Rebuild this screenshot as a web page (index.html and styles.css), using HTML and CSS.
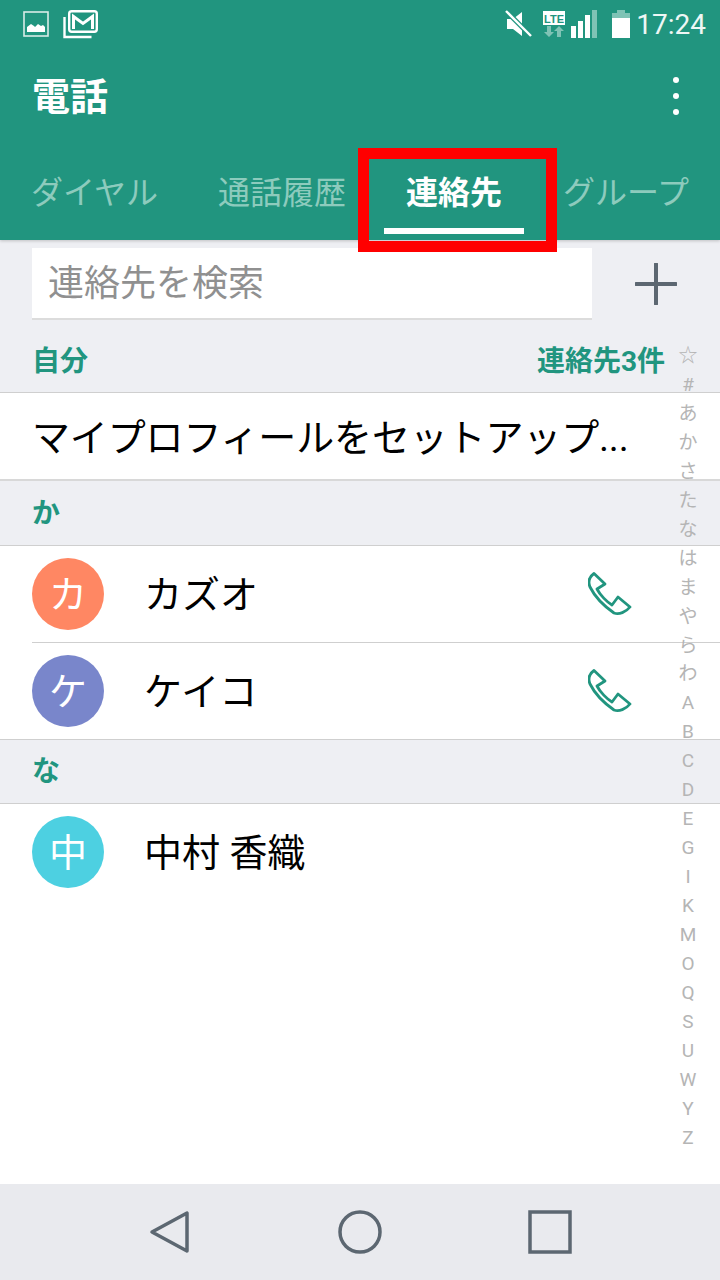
FILE: index.html
```html
<!DOCTYPE html>
<html lang="ja">
<head>
    <meta charset="UTF-8">
    <title>電話</title>
    <link rel="stylesheet" href="styles.css">
</head>
<body>
    <div class="phone">
        <!-- ヘッダー -->
        <header class="header">
            <div class="status-bar">
                <div class="status-left">
                    <svg class="ico-image" width="26" height="26" viewBox="0 0 26 26"><rect x="1" y="1" width="24" height="24" fill="none" stroke="#d9ece8" stroke-width="1.600"/><path d="M4 21v-5l4-3 3 2 1 1 3-3 3 2 2-1 2 2v5z" fill="#fff"/></svg>
                    <svg class="ico-mail" width="35" height="29" viewBox="0 0 35 29"><path d="M1.500 7v20h27" fill="none" stroke="#fff" stroke-width="2.400"/><rect x="6.200" y="1.200" width="27.600" height="20.600" rx="2.500" fill="none" stroke="#fff" stroke-width="2.400"/><path d="M10.500 19V6.500l9.500 7 9.500-7V19" fill="none" stroke="#fff" stroke-width="3"/></svg>
                </div>
                <div class="status-right">
                    <svg class="ico-mute" width="28" height="28" viewBox="0 0 28 28"><path d="M2 9h6l9-7v24l-9-7H2z" fill="#fff"/><path d="M1 1l25 25" stroke="#21957f" stroke-width="5"/><path d="M1 1l25 25" stroke="#fff" stroke-width="2.400"/></svg>
                    <svg class="ico-lte" width="22" height="27" viewBox="0 0 22 27"><rect width="22" height="14" fill="#fff"/><text x="11" y="11.500" text-anchor="middle" class="lte-text">LTE</text><path d="M4 15h4v6h3l-5 5-5-5h3zM14 26h4v-6h3l-5-5-5 5h3z" fill="#7fc3b5"/></svg>
                    <svg class="ico-signal" width="26" height="28" viewBox="0 0 26 28"><rect y="16" width="5" height="12" fill="#fff"/><rect x="7" y="11" width="5" height="17" fill="#fff"/><rect x="14" y="5" width="5" height="23" fill="#fff"/><rect x="21" width="5" height="28" fill="#7fc3b5"/></svg>
                    <svg class="ico-battery" width="18" height="28" viewBox="0 0 18 28"><path d="M5 0h8v3h5v5H0V3h5z" fill="#7fc3b5"/><rect y="8" width="18" height="20" fill="#fff"/></svg>
                    <span class="clock">17:24</span>
                </div>
            </div>
            <div class="title-row">
                <h1 class="title">電話</h1>
                <div class="more"><i></i><i></i><i></i></div>
            </div>
            <nav class="tabs">
                <span class="tab tab-dial">ダイヤル</span>
                <span class="tab tab-log">通話履歴</span>
                <span class="tab tab-on">連絡先</span>
                <span class="tab tab-group">グループ</span>
            </nav>
        </header>

        <!-- 検索 -->
        <div class="search-row">
            <div class="search">連絡先を検索</div>
            <svg class="plus" width="42" height="42" viewBox="0 0 42 42"><path d="M1 21h40M21 1v40" stroke="#5c6771" stroke-width="4" stroke-linecap="round"/></svg>
        </div>

        <div class="section section-me">
            <span>自分</span>
            <span class="count">連絡先3件</span>
        </div>
        <div class="profile">マイプロフィールをセットアップ...</div>

        <div class="section section-ka">か</div>
        <div class="contact with-line">
            <div class="avatar orange">カ</div>
            <div class="name">カズオ</div>
            <svg class="call" width="44" height="44" viewBox="0 0 44 44"><path d="M6 1.500C1 5 0 10 2 15c5 10 14 19 24 26 5 2 12-1 16-6L30 25l-6 8c-5-3-12-10-15-16l8-5z" fill="none" stroke="#21957f" stroke-width="2.800" stroke-linejoin="round"/></svg>
        </div>
        <div class="contact">
            <div class="avatar purple">ケ</div>
            <div class="name">ケイコ</div>
            <svg class="call" width="44" height="44" viewBox="0 0 44 44"><path d="M6 1.500C1 5 0 10 2 15c5 10 14 19 24 26 5 2 12-1 16-6L30 25l-6 8c-5-3-12-10-15-16l8-5z" fill="none" stroke="#21957f" stroke-width="2.800" stroke-linejoin="round"/></svg>
        </div>

        <div class="section">な</div>
        <div class="contact no-line">
            <div class="avatar cyan">中</div>
            <div class="name">中村 香織</div>
        </div>

        <div class="spacer"></div>

        <!-- ナビゲーションバー -->
        <footer class="nav-bar">
            <svg width="44" height="44" viewBox="0 0 44 44"><path d="M39 3v38L4 22z" fill="none" stroke="#5c6771" stroke-width="3.500" stroke-linejoin="round"/></svg>
            <svg width="44" height="44" viewBox="0 0 44 44"><circle cx="22" cy="22" r="20" fill="none" stroke="#5c6771" stroke-width="3.500"/></svg>
            <svg width="44" height="44" viewBox="0 0 44 44"><rect x="2" y="2" width="40" height="40" fill="none" stroke="#5c6771" stroke-width="3.500"/></svg>
        </footer>

        <!-- 重なる要素 -->
        <div class="highlight"></div>
        <div class="index">
            <span>☆</span><span>#</span><span>あ</span><span>か</span><span>さ</span><span>た</span><span>な</span><span>は</span><span>ま</span><span>や</span><span>ら</span><span>わ</span><span>A</span><span>B</span><span>C</span><span>D</span><span>E</span><span>G</span><span>I</span><span>K</span><span>M</span><span>O</span><span>Q</span><span>S</span><span>U</span><span>W</span><span>Y</span><span>Z</span>
        </div>
    </div>
</body>
</html>
```

FILE: styles.css
```css
* { box-sizing: border-box; }
body { margin: 0; font-family: Roboto, "Noto Sans CJK JP", sans-serif; }
.phone { position: relative; width: 720px; height: 1280px; display: flex; flex-direction: column; background: #fff; overflow: hidden; }

.header { height: 240px; flex: none; background: #21957f; color: #fff; box-shadow: 0 1px 3px rgba(0, 0, 0, 0.2); position: relative; }
.status-bar { height: 48px; display: flex; justify-content: space-between; padding: 10px 14px 0 23px; }
.status-left { display: flex; gap: 14px; align-items: flex-start; }
.ico-image { margin-top: 1px; }
.status-right { display: flex; align-items: flex-start; }
.ico-mute { margin: 0 10px 0 0; }
.ico-lte { margin: 1px 6px 0 0; }
.ico-signal { margin: 0 15px 0 0; }
.ico-battery { margin: 0 6px 0 0; }
.lte-text { font: bold 11px "Liberation Sans", sans-serif; fill: #21957f; }
.clock { font-size: 28px; line-height: 30px; color: #eef7f5; }

.title-row { height: 96px; padding: 0 41px 0 32px; display: flex; align-items: center; justify-content: space-between; }
.title { margin: 0 0 6px; font-size: 38px; font-weight: 700; }
.more { display: flex; flex-direction: column; gap: 10px; }
.more i { display: block; width: 6px; height: 6px; border-radius: 50%; background: #fff; }

.tabs { height: 96px; display: flex; padding: 0 0 0 31px; }
.tab { font-size: 32px; line-height: 98px; color: #8dcbbd; white-space: nowrap; }
.tab-dial { width: 187px; }
.tab-log { width: 188px; }
.tab-on { width: 157px; color: #fff; font-weight: 700; position: relative; }
.tab-on::after { content: ""; position: absolute; left: -22px; top: 84px; width: 140px; height: 6px; background: #fff; }

.search-row { height: 80px; flex: none; background: #eeeff3; padding: 8px 0 0 32px; display: flex; }
.search { width: 560px; height: 72px; background: #fff; border-bottom: 2px solid #dcdcdc; font-size: 36px; line-height: 73px; padding-left: 16px; color: #909090; }
.plus { margin: 15px 0 0 43px; }

.section { height: 64px; flex: none; background: #eeeff3; border-bottom: 1px solid #cfcfcf; color: #21957f; font-size: 28px; font-weight: 700; line-height: 64px; padding: 0 32px; }
.section-me { height: 73px; line-height: 84px; display: flex; justify-content: space-between; padding-right: 55px; }
.section-ka { height: 65px; line-height: 66px; }
.profile { height: 88px; flex: none; background: #fff; border-bottom: 2px solid #d8d8d8; font-size: 38px; letter-spacing: -0.15px; line-height: 90px; padding-left: 32px; color: #000; white-space: nowrap; }

.contact { height: 97px; flex: none; padding: 0 0 1px 32px; display: flex; align-items: center; background: #fff; border-bottom: 1px solid #cfcfcf; position: relative; }
.contact.with-line { border-bottom: 0; }
.contact.with-line::after { content: ""; position: absolute; left: 32px; right: 0; bottom: 0; height: 1px; background: #cfcfcf; }
.contact.no-line { border-bottom: 0; }
.avatar { width: 72px; height: 72px; border-radius: 50%; color: #fff; font-size: 38px; line-height: 74px; text-align: center; }
.orange { background: #ff8763; }
.purple { background: #7986cb; }
.cyan { background: #4dd0e1; }
.name { flex: 1; margin: 0 0 5px 40px; font-size: 38px; color: #000; }
.call { margin-right: 88px; }

.spacer { flex: 1; }
.nav-bar { height: 96px; flex: none; background: #e9eaee; display: flex; align-items: center; justify-content: space-between; padding: 0 148px; }

.highlight { position: absolute; left: 358px; top: 148px; width: 199px; height: 104px; border: 11px solid #ff0000; }

.index { position: absolute; left: 668px; top: 341px; width: 40px; display: flex; flex-direction: column; align-items: center; font-size: 19px; color: #b5b5b5; }
.index span { height: 28.960px; line-height: 29px; }
```
